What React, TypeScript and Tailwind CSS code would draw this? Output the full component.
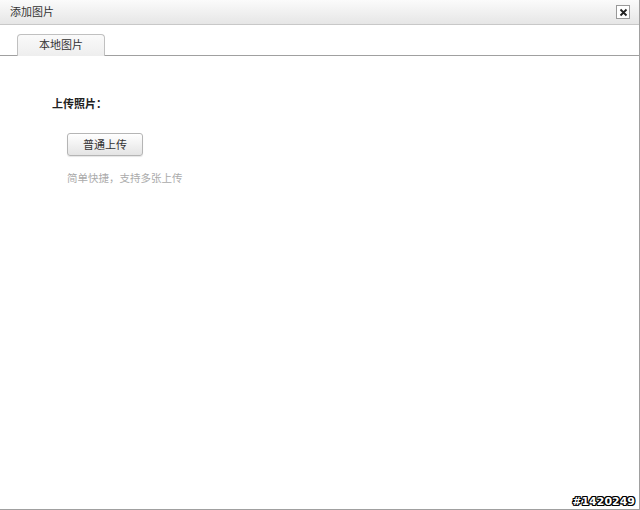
import React from "react";

export default function App() {
  const font = { fontFamily: '"Liberation Sans", "Noto Sans CJK SC", sans-serif' };
  return (
    <div className="relative w-[640px] h-[510px] bg-white overflow-hidden" style={font}>
      <div className="flex flex-col h-full border-r border-b border-[#a0a0a0]">
        <div className="h-[25px] flex items-center justify-between pl-[10px] pr-[9px] border-b border-[#c8c8c8] bg-gradient-to-b from-[#fbfbfb] to-[#e6e6e6]">
          <span className="text-[11px] text-[#333]">添加图片</span>
          <div className="w-[14px] h-[14px] border border-[#999] bg-white flex items-center justify-center">
            <svg width="9" height="9" viewBox="0 0 9 9">
              <path d="M1.5 1.5 L7.5 7.5 M7.5 1.5 L1.5 7.5" stroke="#222" strokeWidth="1.8" />
            </svg>
          </div>
        </div>
        <div className="h-[31px] flex items-end border-b border-[#a0a0a0] pl-[17px]">
          <div className="w-[88px] h-[22px] -mb-px border border-[#c0c0c0] border-b-0 rounded-t-[4px] bg-gradient-to-b from-[#fafafa] to-[#eeeeee] flex items-center justify-center text-[11px] text-[#333]">
            本地图片
          </div>
        </div>
        <div className="pl-[52px] pt-[40px]">
          <div className="text-[11px] font-bold text-[#222]">上传照片：</div>
          <div className="pl-[15px] pt-[19px]">
            <button className="w-[76px] h-[23px] rounded-[3px] border border-[#b5b5b5] bg-gradient-to-b from-[#ffffff] to-[#e4e4e4] text-[11px] text-[#333] shadow-[0_1px_1px_rgba(0,0,0,0.1)]">
              普通上传
            </button>
            <div className="pt-[15px] text-[10.5px] text-[#aaa]">简单快捷，支持多张上传</div>
          </div>
        </div>
      </div>
      <div
        className="absolute right-[5px] bottom-[1px] text-[11px] font-bold text-white leading-[14px]"
        style={{ fontFamily: '"DejaVu Sans", sans-serif', textShadow: "1px 0 #000, -1px 0 #000, 0 1px #000, 0 -1px #000, 1px 1px #000, -1px -1px #000, 1px -1px #000, -1px 1px #000" }}
      >
        #1420249
      </div>
    </div>
  );
}
